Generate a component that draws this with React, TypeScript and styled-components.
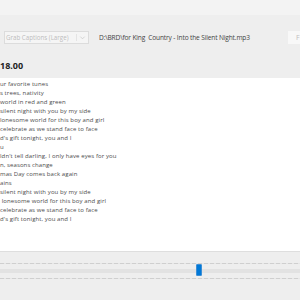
import styled, { createGlobalStyle } from "styled-components";

const GlobalStyle = createGlobalStyle`
  html, body {
    margin: 0;
    padding: 0;
    width: 300px;
    height: 300px;
    overflow: hidden;
    background: #eeeeee;
  }
`;

const lyrics = [
  "ur favorite tunes",
  "s trees, nativity",
  "world in red and green",
  "silent night with you by my side",
  "lonesome world for this boy and girl",
  "celebrate as we stand face to face",
  "d's gift tonight, you and I",
  "u",
  "ldn't tell darling, I only have eyes for you",
  "n, seasons change",
  "mas Day comes back again",
  "ains",
  "silent night with you by my side",
  " lonesome world for this boy and girl",
  "celebrate as we stand face to face",
  "d's gift tonight, you and I",
];

const Window = styled.div`
  width: 300px;
  height: 300px;
  display: flex;
  flex-direction: column;
  font-family: "Open Sans", "Noto Sans", sans-serif;
`;

const TopStrip = styled.div`
  height: 15px;
  background: #f3f3f3;
`;

const Header = styled.div`
  height: 63px;
  background: #eeeeee;
  display: flex;
  flex-direction: column;
`;

const ToolRow = styled.div`
  display: flex;
  align-items: center;
  height: 13px;
  margin-top: 16px;
  padding-left: 4px;
`;

const Dropdown = styled.div`
  box-sizing: border-box;
  width: 85px;
  height: 13px;
  border: 1px solid #dcdcdc;
  background: #f5f5f5;
  display: flex;
  align-items: center;
  justify-content: space-between;
  padding: 0 2px 0 1px;
  font-size: 6.2px;
  color: #bdbdbd;
  white-space: nowrap;
`;

const Chevron = styled.svg`
  width: 7px;
  height: 7px;
  border-left: 1px solid #e4e4e4;
  padding-left: 2px;
`;

const PathLabel = styled.div`
  margin-left: 10px;
  font-size: 6.6px;
  letter-spacing: -0.15px;
  color: #444444;
  white-space: pre;
  flex: 1;
`;

const SideButton = styled.div`
  box-sizing: border-box;
  width: 12px;
  height: 13px;
  background: #f8f8f8;
  font-size: 7px;
  color: #c0c0c0;
  padding-left: 8px;
  overflow: hidden;
  line-height: 13px;
`;

const Price = styled.div`
  margin-top: 16px;
  font-size: 9px;
  font-weight: 700;
  color: #222222;
  line-height: 12px;
`;

const Lyrics = styled.div`
  flex: 1;
  background: #ffffff;
  padding-top: 2px;
  overflow: hidden;
`;

const Line = styled.div`
  font-size: 6px;
  letter-spacing: 0.1px;
  line-height: 9px;
  color: #4c4c4c;
  white-space: pre;
`;

const Footer = styled.div`
  height: 49px;
  border-top: 1px solid #dedede;
  background: #eeeeee;
  display: flex;
  flex-direction: column;
  padding-top: 11px;
  box-sizing: border-box;
`;

const Ticks = styled.div`
  height: 1px;
  background: repeating-linear-gradient(
    to right,
    #cfcfcf 0,
    #cfcfcf 4px,
    #e6e6e6 4px,
    #e6e6e6 6px
  );
`;

const Track = styled.div`
  position: relative;
  height: 4px;
  margin: 5px 0;
  background: #e2e2e2;
`;

const Thumb = styled.div`
  position: absolute;
  left: 196px;
  top: -5px;
  width: 6px;
  height: 12px;
  box-sizing: border-box;
  background: #0078d7;
  border: 1px solid #3d8fd6;
  border-radius: 1px;
`;

export default function App() {
  return (
    <Window>
      <GlobalStyle />
      <TopStrip />
      <Header>
        <ToolRow>
          <Dropdown>
            Grab Captions (Large)
            <Chevron viewBox="0 0 8 8">
              <path d="M1.5 3 L4 5.5 L6.5 3" fill="none" stroke="#c4c4c4" strokeWidth="0.8" />
            </Chevron>
          </Dropdown>
          <PathLabel>D:\BRD\for King  Country - Into the Silent Night.mp3</PathLabel>
          <SideButton>F</SideButton>
        </ToolRow>
        <Price>18.00</Price>
      </Header>
      <Lyrics>
        {lyrics.map((l, i) => (
          <Line key={i}>{l}</Line>
        ))}
      </Lyrics>
      <Footer>
        <Ticks />
        <Track>
          <Thumb />
        </Track>
        <Ticks />
      </Footer>
    </Window>
  );
}
